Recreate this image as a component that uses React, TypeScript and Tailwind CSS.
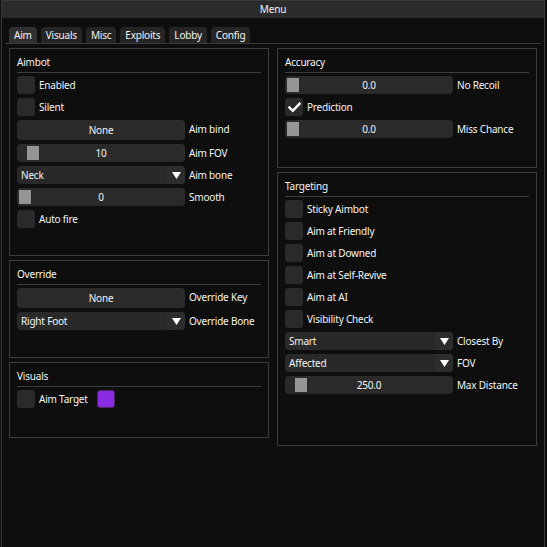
import React from "react";

const FONT = { fontFamily: '"Noto Sans", "Open Sans", sans-serif' };

function Check({ checked = false }: { checked?: boolean }) {
  return (
    <div className="w-[18px] h-[18px] shrink-0 rounded-[3px] bg-[#2a2a2a] flex items-center justify-center">
      {checked && (
        <svg width="13" height="11" viewBox="0 0 13 11">
          <polyline points="1.5,5.5 4.8,8.8 11.5,1.8" fill="none" stroke="#ffffff" strokeWidth="2.4" strokeLinecap="square" />
        </svg>
      )}
    </div>
  );
}

function CheckRow({ label, checked = false }: { label: string; checked?: boolean }) {
  return (
    <div className="flex h-[18px] items-center gap-[4px]">
      <Check checked={checked} />
      <span>{label}</span>
    </div>
  );
}

function Label({ text }: { text: string }) {
  return <span className="ml-[4px] leading-[18px]">{text}</span>;
}

function Slider({ value, frac, label }: { value: string; frac: number; label: string }) {
  const left = 2 + frac * (168 - 4 - 12);
  return (
    <div className="flex h-[18px] items-center">
      <div className="relative w-[168px] h-[18px] rounded-[4px] bg-[#2a2a2a] flex items-center justify-center">
        <div className="absolute top-[2px] bottom-[2px] w-[12px] bg-[#959595]" style={{ left }} />
        <span className="relative">{value}</span>
      </div>
      <Label text={label} />
    </div>
  );
}

function Button({ text, label }: { text: string; label: string }) {
  return (
    <div className="flex h-[20px] items-start">
      <div className="w-[168px] h-[20px] rounded-[4px] bg-[#2a2a2a] flex items-center justify-center">
        <span>{text}</span>
      </div>
      <Label text={label} />
    </div>
  );
}

function Combo({ text, label }: { text: string; label: string }) {
  return (
    <div className="flex h-[18px] items-center">
      <div className="w-[168px] h-[18px] rounded-[4px] bg-[#292929] flex items-center overflow-hidden">
        <span className="flex-1 pl-[4px]">{text}</span>
        <div className="w-[18px] h-[18px] bg-[#2d2d2d] flex items-center justify-center">
          <svg width="9" height="7" viewBox="0 0 9 7">
            <polygon points="0,0 9,0 4.5,7" fill="#ffffff" />
          </svg>
        </div>
      </div>
      <Label text={label} />
    </div>
  );
}

function Panel({ title, h, children }: { title: string; h: string; children: React.ReactNode }) {
  return (
    <div className={`border border-[#3d3d3d] px-[7px] pt-[7px] ${h}`}>
      <div className="h-[13px] leading-[13px]">{title}</div>
      <div className="mt-[3px] h-px bg-[#3d3d3d]" />
      <div className="mt-[3px] flex flex-col gap-[4px]">{children}</div>
    </div>
  );
}

const tabs = ["Aim", "Visuals", "Misc", "Exploits", "Lobby", "Config"];

export default function App() {
  return (
    <div className="w-[547px] h-[547px] overflow-hidden bg-[#0e0e0e] text-[#f4f4f4] text-[10px] tracking-[-0.2px]" style={FONT}>
      <div className="ml-[1px] w-[544px] h-[560px] border border-[#3a3a3a] bg-[#0e0e0e] flex flex-col">
        <div className="h-[17px] bg-[#2b2b2b] flex items-center justify-center leading-[17px]">Menu</div>
        <div className="px-[7px] pt-[9px]">
          <div className="-mx-[4px] px-[4px] border-b border-[#3a3a3a]">
            <div className="flex gap-[4px] h-[16px]">
              {tabs.map((t, i) => (
                <div
                  key={t}
                  className={`px-[5px] h-[16px] rounded-t-[4px] flex items-center leading-[16px] ${i === 0 ? "bg-[#303030]" : "bg-[#252525]"}`}
                >
                  {t}
                </div>
              ))}
            </div>
          </div>
          <div className="mt-[4px] grid grid-cols-[260px_260px] gap-x-[8px]">
            <div className="flex flex-col gap-[4px]">
              <Panel title="Aimbot" h="h-[208px]">
                <CheckRow label="Enabled" />
                <CheckRow label="Silent" />
                <Button text="None" label="Aim bind" />
                <Slider value="10" frac={0.053} label="Aim FOV" />
                <Combo text="Neck" label="Aim bone" />
                <Slider value="0" frac={0} label="Smooth" />
                <CheckRow label="Auto fire" />
              </Panel>
              <Panel title="Override" h="h-[98px]">
                <Button text="None" label="Override Key" />
                <Combo text="Right Foot" label="Override Bone" />
              </Panel>
              <Panel title="Visuals" h="h-[76px]">
                <div className="flex h-[18px] items-center">
                  <Check />
                  <span className="ml-[4px]">Aim Target</span>
                  <div className="ml-[9px] w-[18px] h-[18px] rounded-[3px] bg-[#8a2be2] border border-[#4a2a66]" />
                </div>
              </Panel>
            </div>
            <div className="flex flex-col gap-[4px]">
              <Panel title="Accuracy" h="h-[120px]">
                <Slider value="0.0" frac={0} label="No Recoil" />
                <CheckRow label="Prediction" checked />
                <Slider value="0.0" frac={0} label="Miss Chance" />
              </Panel>
              <Panel title="Targeting" h="h-[274px]">
                <CheckRow label="Sticky Aimbot" />
                <CheckRow label="Aim at Friendly" />
                <CheckRow label="Aim at Downed" />
                <CheckRow label="Aim at Self-Revive" />
                <CheckRow label="Aim at AI" />
                <CheckRow label="Visibility Check" />
                <Combo text="Smart" label="Closest By" />
                <Combo text="Affected" label="FOV" />
                <Slider value="250.0" frac={0.053} label="Max Distance" />
              </Panel>
            </div>
          </div>
        </div>
      </div>
    </div>
  );
}
